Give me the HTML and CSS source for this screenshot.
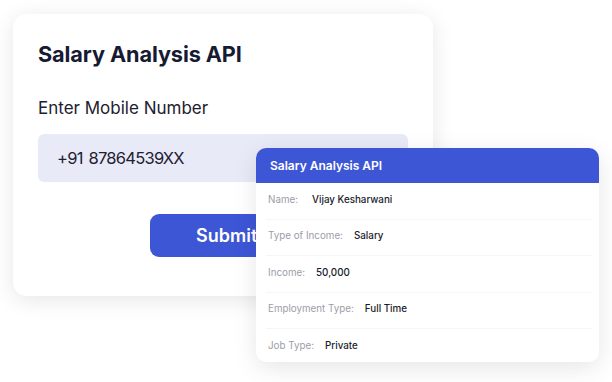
FILE: index.html
```html
<!DOCTYPE html>
<html>
<head>
<meta charset="utf-8">
<link rel="stylesheet" href="styles.css">
</head>
<body>
<div class="stage">
  <div class="form-card">
    <h1 class="form-title">Salary Analysis API</h1>
    <label class="form-label">Enter Mobile Number</label>
    <div class="form-input">+91 87864539XX</div>
    <div class="form-actions">
      <button class="submit-btn">Submit</button>
    </div>
  </div>
  <div class="result-card">
    <div class="result-head">Salary Analysis API</div>
    <div class="result-row"><span class="k name-k">Name:</span><span class="v">Vijay Kesharwani</span></div>
    <div class="result-row"><span class="k">Type of Income:</span><span class="v">Salary</span></div>
    <div class="result-row"><span class="k">Income:</span><span class="v">50,000</span></div>
    <div class="result-row"><span class="k">Employment Type:</span><span class="v">Full Time</span></div>
    <div class="result-row"><span class="k">Job Type:</span><span class="v">Private</span></div>
  </div>
</div>
</body>
</html>
```
FILE: styles.css
```css
* { box-sizing: border-box; }
html, body { margin: 0; padding: 0; background: #ffffff; }
body { font-family: Inter, "Noto Sans", sans-serif; color: #161a33; }
.stage { position: relative; width: 612px; height: 382px; overflow: hidden; }
.form-card {
  margin: 14px 0 0 13px;
  width: 420px;
  height: 282px;
  background: #fff;
  border-radius: 14px;
  box-shadow: 0 4px 22px rgba(0,0,0,0.10);
  padding: 27px 25px 0 25px;
}
.form-title { margin: 0; font-size: 21.7px; font-weight: 700; line-height: 26px; color: #161a33; letter-spacing: -0.1px; }
.form-label { display: block; margin-top: 30px; font-size: 17px; line-height: 22px; font-weight: 400; color: #1d2030; }
.form-input {
  margin-top: 15px;
  width: 370px; height: 48px;
  background: #e9eaf8;
  border-radius: 6px;
  padding-left: 19px;
  display: flex; align-items: center;
  font-size: 16.5px; letter-spacing: -0.75px; word-spacing: 2px; color: #1d2030;
  padding-bottom: 1px;
}
.form-actions { margin-top: 32px; padding-left: 112px; }
.submit-btn {
  width: 240px; height: 43px;
  background: #3d56d6; color: #fff;
  border: 0; border-radius: 9px;
  font-family: inherit; font-size: 18px; font-weight: 600;
  text-align: left; padding-left: 46px;
}
.result-card {
  position: absolute; left: 256px; top: 148px;
  width: 343px; height: 214px;
  background: #fff;
  border-radius: 10px;
  box-shadow: 0 6px 24px rgba(0,0,0,0.10);
  overflow: hidden;
}
.result-head {
  height: 35px; background: #3d56d6; color: #fff;
  font-size: 12px; font-weight: 600; padding-left: 14px;
  display: flex; align-items: center;
}
.result-row {
  height: 36.5px; display: flex; align-items: center; gap: 11px;
  padding: 0 0 3px 2px; font-size: 9.8px;
  border-bottom: 1px solid #f6f6f8;
  margin: 0 6px 0 10px;
}
.result-row:last-child { border-bottom: 0; }
.k { color: #9c9ca6; }
.name-k { margin-right: 3px; }
.v { color: #1a1c2c; font-weight: 500; }
```
